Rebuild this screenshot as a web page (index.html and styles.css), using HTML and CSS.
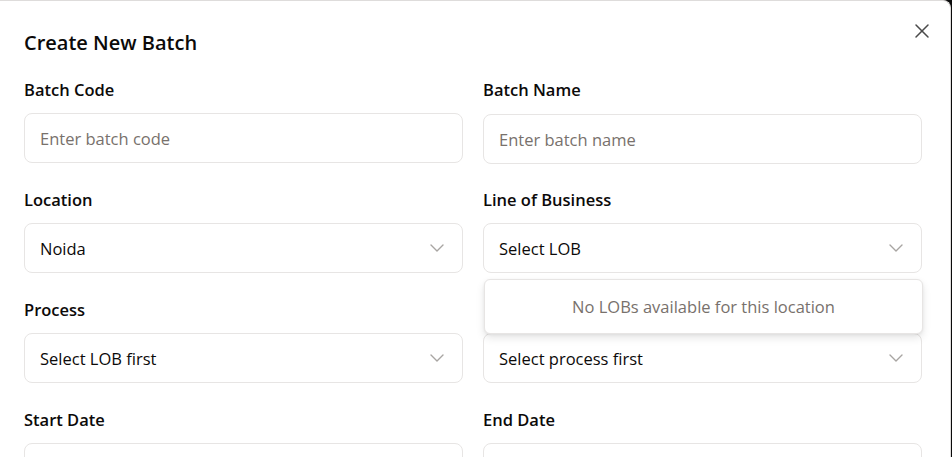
FILE: index.html
```html
<!DOCTYPE html>
<html>
<head>
<meta charset="utf-8">
<link rel="stylesheet" href="styles.css">
</head>
<body>
<div class="dialog">
  <button class="close" aria-label="Close">
    <svg width="24" height="24" viewBox="0 0 24 24" fill="none" stroke="currentColor" stroke-width="1.5" stroke-linecap="round" stroke-linejoin="round"><path d="M18 6 6 18"/><path d="m6 6 12 12"/></svg>
  </button>
  <h2 class="title">Create New Batch</h2>
  <div class="grid">
    <div class="field">
      <label class="label">Batch Code</label>
      <div class="input placeholder">Enter batch code</div>
    </div>
    <div class="field">
      <label class="label">Batch Name</label>
      <div class="input placeholder shift">Enter batch name</div>
    </div>
    <div class="field">
      <label class="label">Location</label>
      <div class="input select"><span>Noida</span><svg class="chev" width="24" height="24" viewBox="0 0 24 24" fill="none" stroke="currentColor" stroke-width="1.4" stroke-linecap="round" stroke-linejoin="round"><path d="m6 9 6 6 6-6"/></svg></div>
    </div>
    <div class="field">
      <label class="label">Line of Business</label>
      <div class="input select"><span>Select LOB</span><svg class="chev" width="24" height="24" viewBox="0 0 24 24" fill="none" stroke="currentColor" stroke-width="1.4" stroke-linecap="round" stroke-linejoin="round"><path d="m6 9 6 6 6-6"/></svg></div>
      <div class="popover">No LOBs available for this location</div>
    </div>
    <div class="field">
      <label class="label">Process</label>
      <div class="input select"><span>Select LOB first</span><svg class="chev" width="24" height="24" viewBox="0 0 24 24" fill="none" stroke="currentColor" stroke-width="1.4" stroke-linecap="round" stroke-linejoin="round"><path d="m6 9 6 6 6-6"/></svg></div>
    </div>
    <div class="field">
      <label class="label">&nbsp;</label>
      <div class="input select"><span>Select process first</span><svg class="chev" width="24" height="24" viewBox="0 0 24 24" fill="none" stroke="currentColor" stroke-width="1.4" stroke-linecap="round" stroke-linejoin="round"><path d="m6 9 6 6 6-6"/></svg></div>
    </div>
    <div class="field">
      <label class="label">Start Date</label>
      <div class="input"></div>
    </div>
    <div class="field">
      <label class="label">End Date</label>
      <div class="input"></div>
    </div>
  </div>
</div>
</body>
</html>
```

FILE: styles.css
```css
* { box-sizing: border-box; }
html, body { margin: 0; height: 100%; }
body {
  background: #0b0b0b;
  font-family: "Open Sans", "Noto Sans", sans-serif;
  color: #0c0a09;
  overflow: hidden;
}
.dialog {
  position: relative;
  width: 951px;
  height: 600px;
  background: #fff;
  border-top: 1px solid #dedcdb;
  border-right: 1px solid #dedcdb;
  border-top-right-radius: 8px;
  padding: 28px 29px 0 24px;
}
.close {
  position: absolute;
  top: 18px;
  right: 16px;
  width: 24px;
  height: 24px;
  padding: 0;
  border: 0;
  background: none;
  color: #4a4a4a;
  display: flex;
  align-items: center;
  justify-content: center;
}
.title {
  margin: 0;
  font-size: 20px;
  line-height: 28px;
  font-weight: 600;
  color: #0c0a09;
}
.grid {
  display: grid;
  grid-template-columns: 439px 439px;
  column-gap: 20px;
  row-gap: 25px;
  margin-top: 21px;
}
.field {
  position: relative;
  display: flex;
  flex-direction: column;
  gap: 11px;
}
.label {
  font-size: 16.5px;
  line-height: 24px;
  font-weight: 600;
  color: #0c0a09;
}
.input {
  height: 50px;
  border: 1px solid #e7e5e4;
  border-radius: 8px;
  padding: 0 15px;
  display: flex;
  align-items: center;
  font-size: 16.5px;
  color: #0c0a09;
  background: #fff;
}
.shift { transform: translateY(1px); }
.placeholder { color: #78716c; }
.select { justify-content: space-between; }
.chev { color: #a8a5a2; margin-right: -2px; }
.popover {
  position: absolute;
  left: 1px;
  top: 91px;
  width: 439px;
  height: 55px;
  background: #fff;
  border: 1px solid #e7e5e4;
  border-radius: 6px;
  box-shadow: 0 4px 8px rgba(0,0,0,0.10), 0 1px 3px rgba(0,0,0,0.06);
  display: flex;
  align-items: center;
  justify-content: center;
  font-size: 16.5px;
  color: #78716c;
  z-index: 2;
}
```
